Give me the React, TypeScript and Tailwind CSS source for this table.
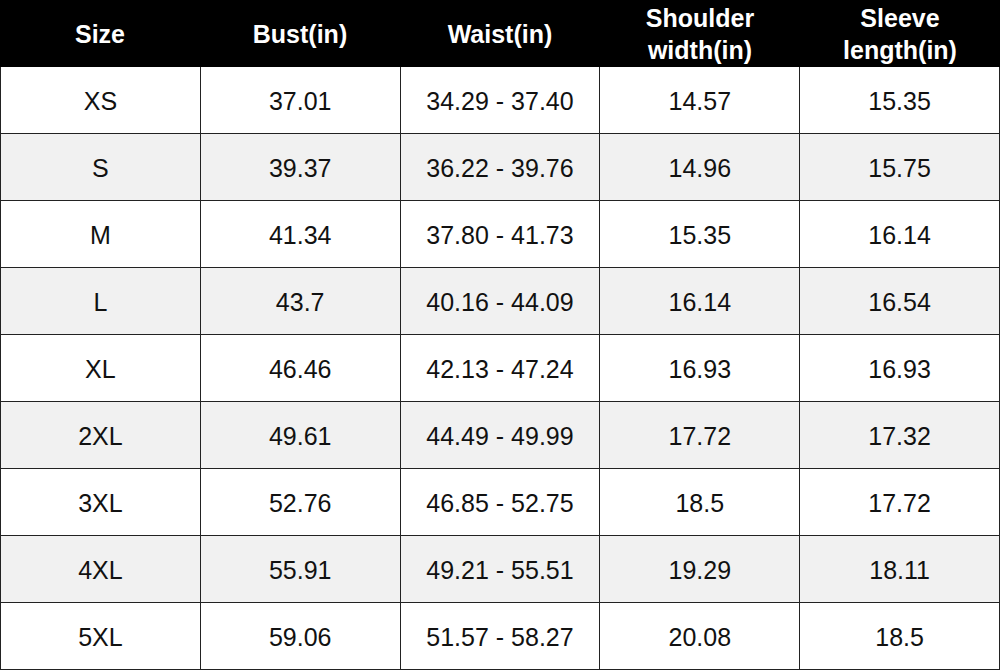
import React from 'react';

const headers = ['Size', 'Bust(in)', 'Waist(in)', 'Shoulder\nwidth(in)', 'Sleeve\nlength(in)'];

const rows: string[][] = [
  ['XS', '37.01', '34.29 - 37.40', '14.57', '15.35'],
  ['S', '39.37', '36.22 - 39.76', '14.96', '15.75'],
  ['M', '41.34', '37.80 - 41.73', '15.35', '16.14'],
  ['L', '43.7', '40.16 - 44.09', '16.14', '16.54'],
  ['XL', '46.46', '42.13 - 47.24', '16.93', '16.93'],
  ['2XL', '49.61', '44.49 - 49.99', '17.72', '17.32'],
  ['3XL', '52.76', '46.85 - 52.75', '18.5', '17.72'],
  ['4XL', '55.91', '49.21 - 55.51', '19.29', '18.11'],
  ['5XL', '59.06', '51.57 - 58.27', '20.08', '18.5'],
];

const App: React.FC = () => {
  return (
    <div
      className="w-[1000px] h-[670px] bg-white text-[#111]"
      style={{ fontFamily: '"Liberation Sans", Arial, sans-serif' }}
    >
      {/* header */}
      <div className="grid grid-cols-5 h-[67px] bg-black text-white">
        {headers.map((h) => (
          <div
            key={h}
            className="flex items-center justify-center text-center font-bold text-[25px] leading-[32px] whitespace-pre-line"
          >
            {h}
          </div>
        ))}
      </div>

      <div className="border-l border-[#222]">
        {rows.map((row, i) => (
          <div
            key={row[0]}
            className={`grid grid-cols-5 h-[67px] border-b border-[#222] ${i % 2 === 1 ? 'bg-[#f1f1f1]' : 'bg-white'}`}
          >
            {row.map((cell, j) => (
              <div
                key={j}
                className="flex items-center justify-center pt-[4px] border-r border-[#222] text-[25px]"
              >
                {cell}
              </div>
            ))}
          </div>
        ))}
      </div>
    </div>
  );
};

export default App;
